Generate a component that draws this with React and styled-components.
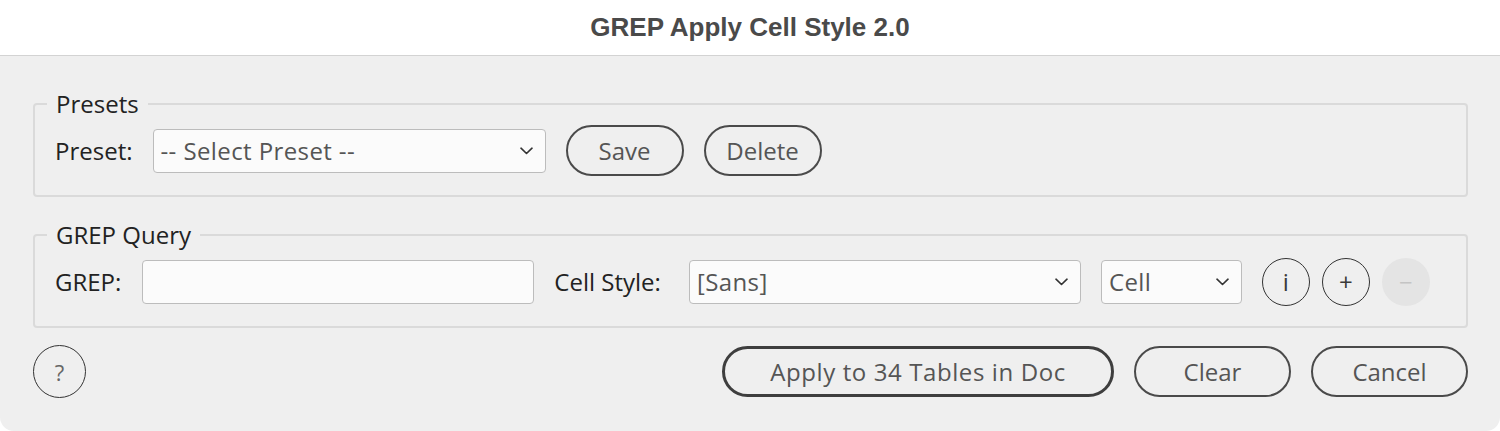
import React from 'react';
import styled, { createGlobalStyle, css } from 'styled-components';

const GlobalStyle = createGlobalStyle`
    html, body {
        margin: 0;
        padding: 0;
        background: #ffffff;
    }
    body {
        font-family: 'Open Sans', 'Noto Sans', sans-serif;
    }
`;

const Chevron = () => (
    <svg width="13" height="8" viewBox="0 0 13 8" fill="none">
        <path d="M1 1.2 L6.5 6.5 L12 1.2" stroke="#333" strokeWidth="1.6" strokeLinecap="round" strokeLinejoin="round" />
    </svg>
);

const Select = ({ value, width }) => (
    <SelectBox $width={width}>
        <SelectText>{value}</SelectText>
        <Chevron />
    </SelectBox>
);

export default function App() {
    return (
        <>
            <GlobalStyle />
            <Dialog>
                <TitleBar>GREP Apply Cell Style 2.0</TitleBar>
                <Body>
                    <Group>
                        <Legend>Presets</Legend>
                        <Row>
                            <Label>Preset:</Label>
                            <Select value="-- Select Preset --" width={393} />
                            <PillButton $width={118}>Save</PillButton>
                            <PillButton $width={118}>Delete</PillButton>
                        </Row>
                    </Group>

                    <Group $gap={26}>
                        <Legend>GREP Query</Legend>
                        <Row>
                            <Label $space={1}>GREP:</Label>
                            <TextField $width={392} />
                            <Label $space={8}>Cell Style:</Label>
                            <Select value="[Sans]" width={392} />
                            <Select value="Cell" width={141} />
                            <CircleGroup>
                                <CircleButton>i</CircleButton>
                                <CircleButton>+</CircleButton>
                                <CircleButton $disabled>−</CircleButton>
                            </CircleGroup>
                        </Row>
                    </Group>

                    <Footer>
                        <HelpButton>?</HelpButton>
                        <FooterActions>
                            <PillButton $width={392} $default>Apply to 34 Tables in Doc</PillButton>
                            <PillButton $width={157}>Clear</PillButton>
                            <PillButton $width={157}>Cancel</PillButton>
                        </FooterActions>
                    </Footer>
                </Body>
            </Dialog>
        </>
    );
}

// ---------------------------STYLES-------------------------------------------//

const Dialog = styled.div`
    width: 1500px;
    height: 431px;
    display: flex;
    flex-direction: column;
    background: #ffffff;
`;

const TitleBar = styled.div`
    height: 55px;
    flex-shrink: 0;
    display: flex;
    align-items: center;
    justify-content: center;
    border-bottom: 1px solid #d3d3d3;
    font-family: 'Liberation Sans', Arial, sans-serif;
    font-weight: 700;
    font-size: 26px;
    color: #4a4a4a;
`;

const Body = styled.div`
    flex: 1;
    display: flex;
    flex-direction: column;
    background: #efefef;
    border-radius: 0 0 14px 14px;
    padding: 36px 32px 0 33px;
`;

const Group = styled.fieldset`
    margin: ${(p) => (p.$gap ? `${p.$gap}px` : '0')} 0 0 0;
    padding: 0 21px 19px 20px;
    border: 2px solid #dadada;
    border-radius: 4px;
    min-width: 0;
`;

const Legend = styled.legend`
    padding: 0 9px;
    margin-left: -8px;
    font-size: 24px;
    line-height: 24px;
    color: #222222;
`;

const Row = styled.div`
    display: flex;
    align-items: center;
    gap: 20px;
    height: 51px;
    margin-top: 9px;
`;

const Label = styled.span`
    font-size: 24px;
    color: #222222;
    white-space: nowrap;
    margin-right: ${(p) => p.$space || 0}px;
`;

const fieldBox = css`
    box-sizing: border-box;
    width: ${(p) => p.$width}px;
    height: 44px;
    border: 1.5px solid #bcbcbc;
    border-radius: 4px;
    background: #fbfbfb;
`;

const SelectBox = styled.div`
    ${fieldBox};
    display: flex;
    align-items: center;
    justify-content: space-between;
    padding: 0 12px 0 7px;
`;

const SelectText = styled.span`
    font-size: 24px;
    letter-spacing: 0.4px;
    color: #555555;
    white-space: nowrap;
`;

const TextField = styled.div`
    ${fieldBox};
`;

const PillButton = styled.button`
    box-sizing: border-box;
    width: ${(p) => p.$width}px;
    height: 51px;
    padding: 0;
    border: ${(p) => (p.$default ? '3px solid #3e3e3e' : '2px solid #4a4a4a')};
    border-radius: 26px;
    background: transparent;
    font-family: 'Open Sans', 'Noto Sans', sans-serif;
    font-size: 24px;
    letter-spacing: ${(p) => (p.$default ? '0.6px' : '0')};
    color: #555555;
    white-space: nowrap;
`;

const CircleGroup = styled.div`
    display: flex;
    align-items: center;
    gap: 12px;
`;

const CircleButton = styled.button`
    box-sizing: border-box;
    width: 48px;
    height: 48px;
    padding: 0;
    border-radius: 50%;
    border: ${(p) => (p.$disabled ? 'none' : '1.5px solid #333333')};
    background: ${(p) => (p.$disabled ? '#e4e4e4' : 'transparent')};
    font-family: 'Open Sans', 'Noto Sans', sans-serif;
    font-size: 24px;
    line-height: 1;
    color: ${(p) => (p.$disabled ? '#c4c4c4' : '#3a3a3a')};
    display: flex;
    align-items: center;
    justify-content: center;
`;

const Footer = styled.div`
    display: flex;
    align-items: center;
    justify-content: space-between;
    margin-top: 17px;
`;

const HelpButton = styled.button`
    box-sizing: border-box;
    width: 53px;
    height: 53px;
    padding: 0;
    border-radius: 50%;
    border: 1.5px solid #333333;
    background: transparent;
    font-family: 'Open Sans', 'Noto Sans', sans-serif;
    font-size: 22px;
    color: #666666;
    display: flex;
    align-items: center;
    justify-content: center;
`;

const FooterActions = styled.div`
    display: flex;
    align-items: center;
    gap: 20px;
`;
